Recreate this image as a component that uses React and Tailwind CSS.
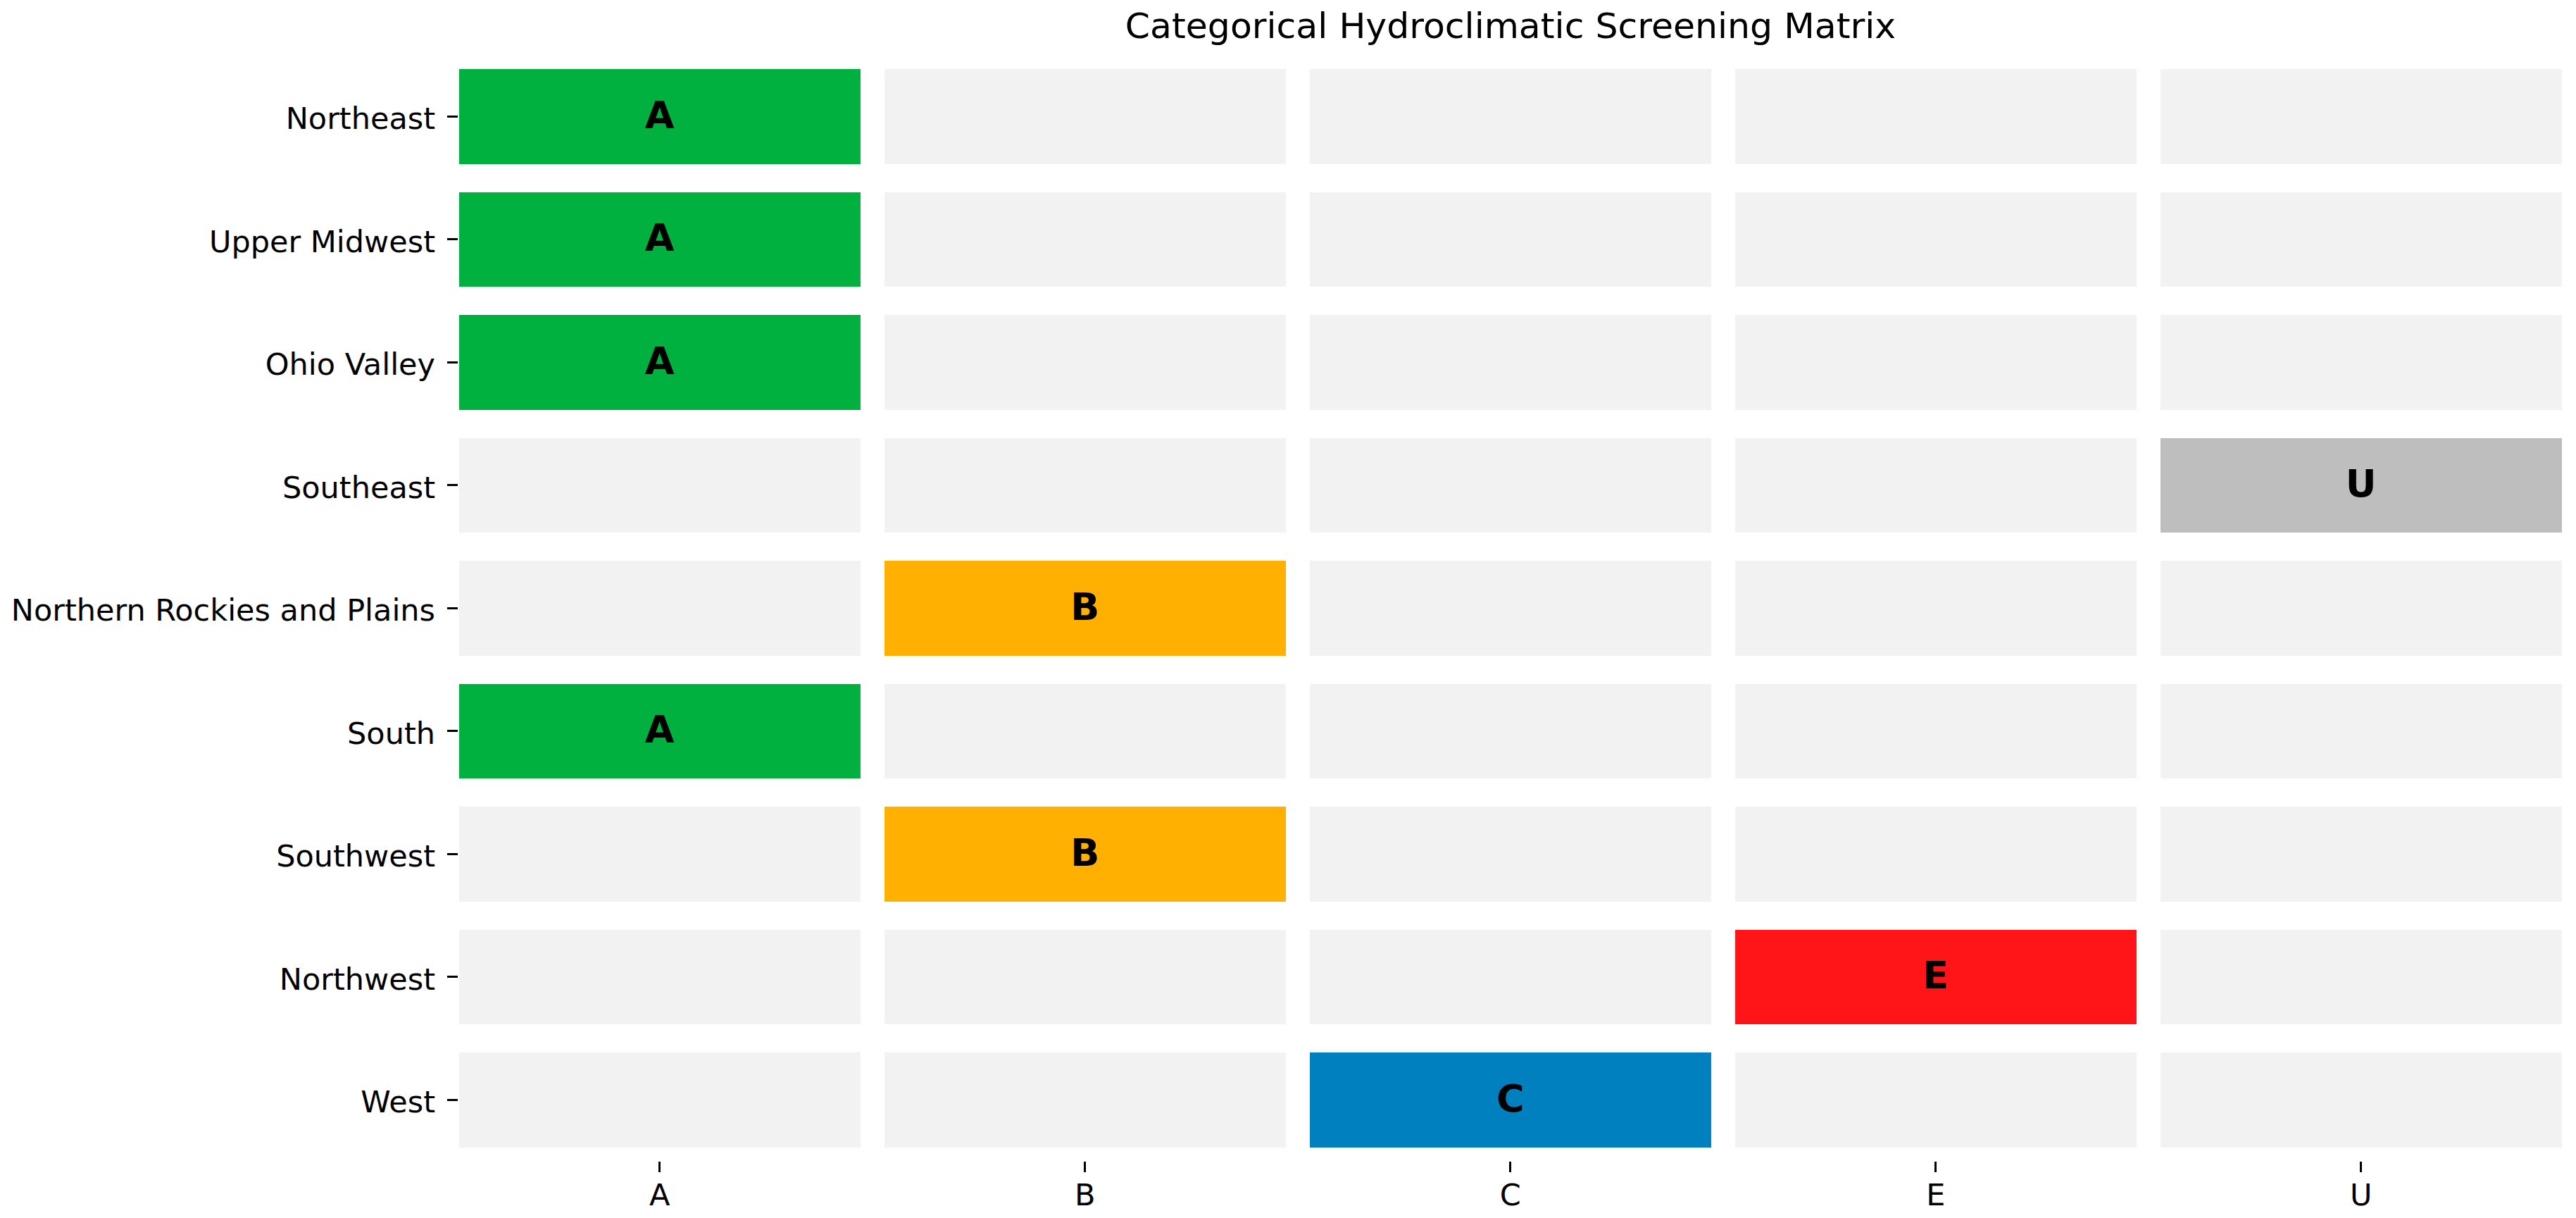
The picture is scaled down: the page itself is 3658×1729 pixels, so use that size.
import React from 'react';

const columns = ['A', 'B', 'C', 'E', 'U'];

const palette = {
  A: 'bg-[#00b140]',
  B: 'bg-[#ffb000]',
  C: 'bg-[#0080be]',
  E: 'bg-[#ff1418]',
  U: 'bg-[#bebebe]',
};

const regions = [
  { name: 'Northeast', cat: 'A' },
  { name: 'Upper Midwest', cat: 'A' },
  { name: 'Ohio Valley', cat: 'A' },
  { name: 'Southeast', cat: 'U' },
  { name: 'Northern Rockies and Plains', cat: 'B' },
  { name: 'South', cat: 'A' },
  { name: 'Southwest', cat: 'B' },
  { name: 'Northwest', cat: 'E' },
  { name: 'West', cat: 'C' },
];

const Cell = ({ cat, active }) => (
  <div
    className={`flex items-center justify-center h-[134.5px] ${active ? palette[cat] : 'bg-[#f2f2f2]'}`}
  >
    {active && (
      <span className="text-[54px] leading-none font-bold text-black pb-[3px]">{cat}</span>
    )}
  </div>
);

const App = () => {
  return (
    <div className="w-[3658px] h-[1729px] bg-white text-black overflow-hidden font-['DejaVu_Sans',sans-serif]">
      {/* title, centred over the plot area */}
      <div className="h-[98px] pl-[635px] w-[3655px]">
        <h1 className="pt-[12px] text-[50.5px] leading-none font-normal text-center">
          Categorical Hydroclimatic Screening Matrix
        </h1>
      </div>

      <div className="flex flex-col gap-[40px]">
        {regions.map((r) => (
          <div key={r.name} className="flex">
            <div className="w-[652px] flex items-center justify-end shrink-0">
              <span className="text-[43px] leading-none whitespace-nowrap pt-[7px]">{r.name}</span>
              <span className="ml-[17px] mr-[2px] w-[15px] h-[3.3px] bg-black shrink-0" />
            </div>
            <div className="grid grid-cols-[repeat(5,569.5px)] gap-x-[34.5px]">
              {columns.map((c) => (
                <Cell key={c} cat={c} active={r.cat === c} />
              ))}
            </div>
          </div>
        ))}
      </div>

      {/* x axis */}
      <div className="flex mt-[20px]">
        <div className="w-[652px] shrink-0" />
        <div className="grid grid-cols-[repeat(5,569.5px)] gap-x-[34.5px]">
          {columns.map((c) => (
            <div key={c} className="flex flex-col items-center">
              <span className="w-[3.3px] h-[15px] bg-black" />
              <span className="mt-[11px] text-[43px] leading-none">{c}</span>
            </div>
          ))}
        </div>
      </div>
    </div>
  );
};

export default App;
